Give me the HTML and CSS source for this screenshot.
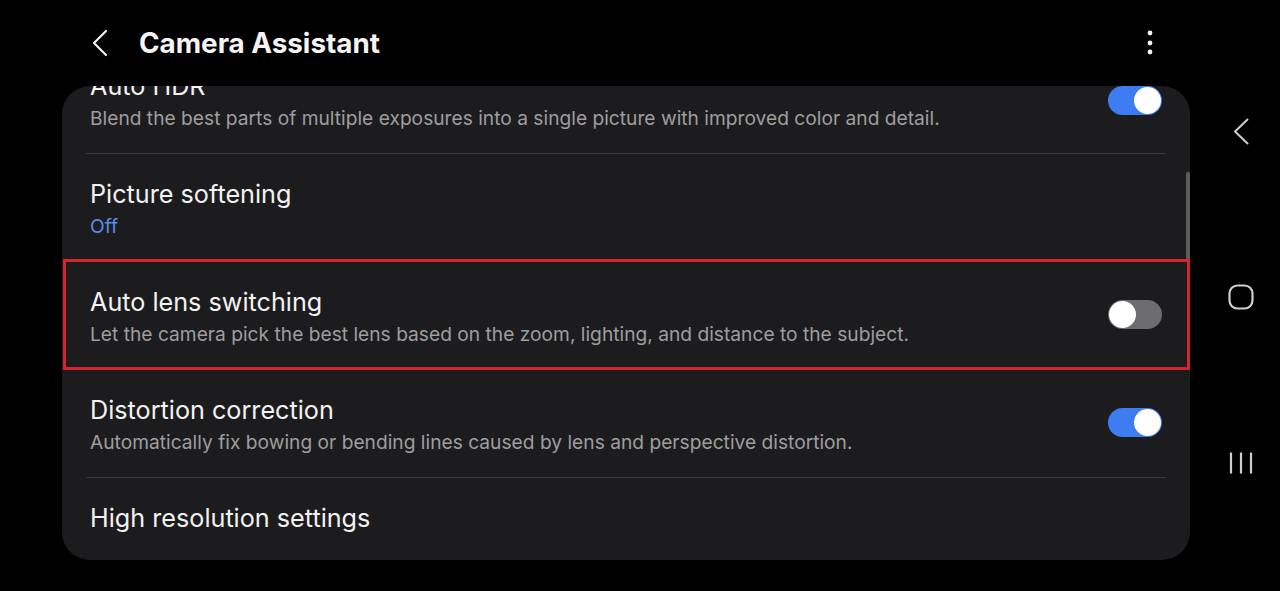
FILE: index.html
```html
<!DOCTYPE html>
<html lang="en">
<head>
<meta charset="utf-8">
<title>Camera Assistant</title>
<link rel="stylesheet" href="styles.css">
</head>
<body>
<div class="screen">
  <div class="main">
    <header class="appbar">
      <svg class="back" width="18" height="28" viewBox="0 0 18 28"><path d="M15 2 L3 14 L15 26" fill="none" stroke="#f2f2f2" stroke-width="2.2" stroke-linecap="round" stroke-linejoin="round"/></svg>
      <h1 class="title">Camera Assistant</h1>
      <svg class="kebab" width="24" height="30" viewBox="0 0 24 30"><circle cx="12" cy="5" r="2.4" fill="#f2f2f2"/><circle cx="12" cy="15" r="2.4" fill="#f2f2f2"/><circle cx="12" cy="24" r="2.4" fill="#f2f2f2"/></svg>
    </header>
    <section class="card">
      <div class="scrollbar"></div>
      <div class="list">
        <div class="row">
          <div class="text">
            <div class="label">Auto HDR</div>
            <div class="desc">Blend the best parts of multiple exposures into a single picture with improved color and detail.</div>
          </div>
          <span class="switch on first"><span class="knob"></span></span>
        </div>
        <div class="divider"></div>
        <div class="row">
          <div class="text">
            <div class="label">Picture softening</div>
            <div class="value">Off</div>
          </div>
        </div>
        <div class="divider"></div>
        <div class="row highlighted">
          <div class="text">
            <div class="label">Auto lens switching</div>
            <div class="desc">Let the camera pick the best lens based on the zoom, lighting, and distance to the subject.</div>
          </div>
          <span class="switch off"><span class="knob"></span></span>
        </div>
        <div class="divider"></div>
        <div class="row">
          <div class="text">
            <div class="label">Distortion correction</div>
            <div class="desc">Automatically fix bowing or bending lines caused by lens and perspective distortion.</div>
          </div>
          <span class="switch on"><span class="knob"></span></span>
        </div>
        <div class="divider"></div>
        <div class="row">
          <div class="text">
            <div class="label">High resolution settings</div>
          </div>
        </div>
      </div>
    </section>
  </div>
  <nav class="navbar">
    <div class="slot"><svg width="18" height="27" viewBox="0 0 18 27"><path d="M15.5 1.5 L3 13.5 L15.5 25.5" fill="none" stroke="#cfcfcf" stroke-width="2" stroke-linecap="round" stroke-linejoin="round"/></svg></div>
    <div class="slot"><svg width="26" height="26" viewBox="0 0 26 26"><rect x="1.5" y="1.5" width="23" height="23" rx="8" fill="none" stroke="#cfcfcf" stroke-width="2.2"/></svg></div>
    <div class="slot"><svg width="24" height="24" viewBox="0 0 24 24"><path d="M2 1.5 V22.5 M12 1.5 V22.5 M22 1.5 V22.5" fill="none" stroke="#cfcfcf" stroke-width="2.2"/></svg></div>
  </nav>
</div>
</body>
</html>
```

FILE: styles.css
```css
* { box-sizing: border-box; }
html, body { margin: 0; padding: 0; background: #000; }
body { font-family: Inter, Roboto, "Noto Sans", sans-serif; color: #f2f2f2; }

.screen {
  width: 1280px;
  height: 591px;
  display: flex;
  overflow: hidden;
  background: #000;
}

.main {
  width: 1210px;
  display: flex;
  flex-direction: column;
}

.appbar {
  height: 86px;
  display: flex;
  align-items: center;
  padding-left: 91px;
  padding-right: 48px;
}
.appbar .back { flex: none; }
.title {
  margin: 0 0 0 30px;
  font-size: 27.8px;
  font-weight: 700;
  color: #f4f4f4;
}
.kebab { margin-left: auto; flex: none; }

.card {
  position: relative;
  margin-left: 62px;
  width: 1128px;
  height: 474px;
  background: #1c1c1e;
  border-radius: 28px;
  overflow: hidden;
}
.scrollbar {
  position: absolute;
  right: 0;
  top: 86px;
  width: 4px;
  height: 88px;
  border-radius: 2px;
  background: #5c5c5e;
}

.list { margin-top: -40px; }

.row {
  height: 107px;
  display: flex;
  align-items: flex-start;
  padding: 25px 28px 0 28px;
}
.row .text { flex: 1; }
.label {
  font-size: 25.2px;
  line-height: 31px;
  color: #f2f2f2;
}
.desc {
  font-size: 19.2px;
  line-height: 32px;
  color: #9e9e9e;
}
.value {
  font-size: 19.2px;
  line-height: 32px;
  color: #5a8ce6;
}

.divider {
  height: 1px;
  margin: 0 24px;
  background: #38383a;
}

.highlighted { position: relative; }
.highlighted::after {
  content: "";
  position: absolute;
  top: -3px;
  bottom: -1px;
  left: 1px;
  right: 0;
  border: 3px solid #d3262d;
  pointer-events: none;
}

.switch {
  flex: none;
  width: 54px;
  height: 29px;
  border-radius: 15px;
  margin-top: 13px;
  display: flex;
  align-items: center;
  padding: 0 1px;
}
.switch.first { margin-top: 15px; }
.switch .knob {
  width: 27px;
  height: 27px;
  border-radius: 50%;
  background: #fff;
}
.switch.on { background: #3e7cf2; justify-content: flex-end; }
.switch.off { background: #6d6d70; justify-content: flex-start; }

.navbar {
  width: 70px;
  padding-top: 48px;
  padding-right: 8px;
  display: flex;
  flex-direction: column;
  align-items: center;
}
.navbar .slot {
  height: 166px;
  width: 100%;
  display: flex;
  align-items: center;
  justify-content: center;
}
```
